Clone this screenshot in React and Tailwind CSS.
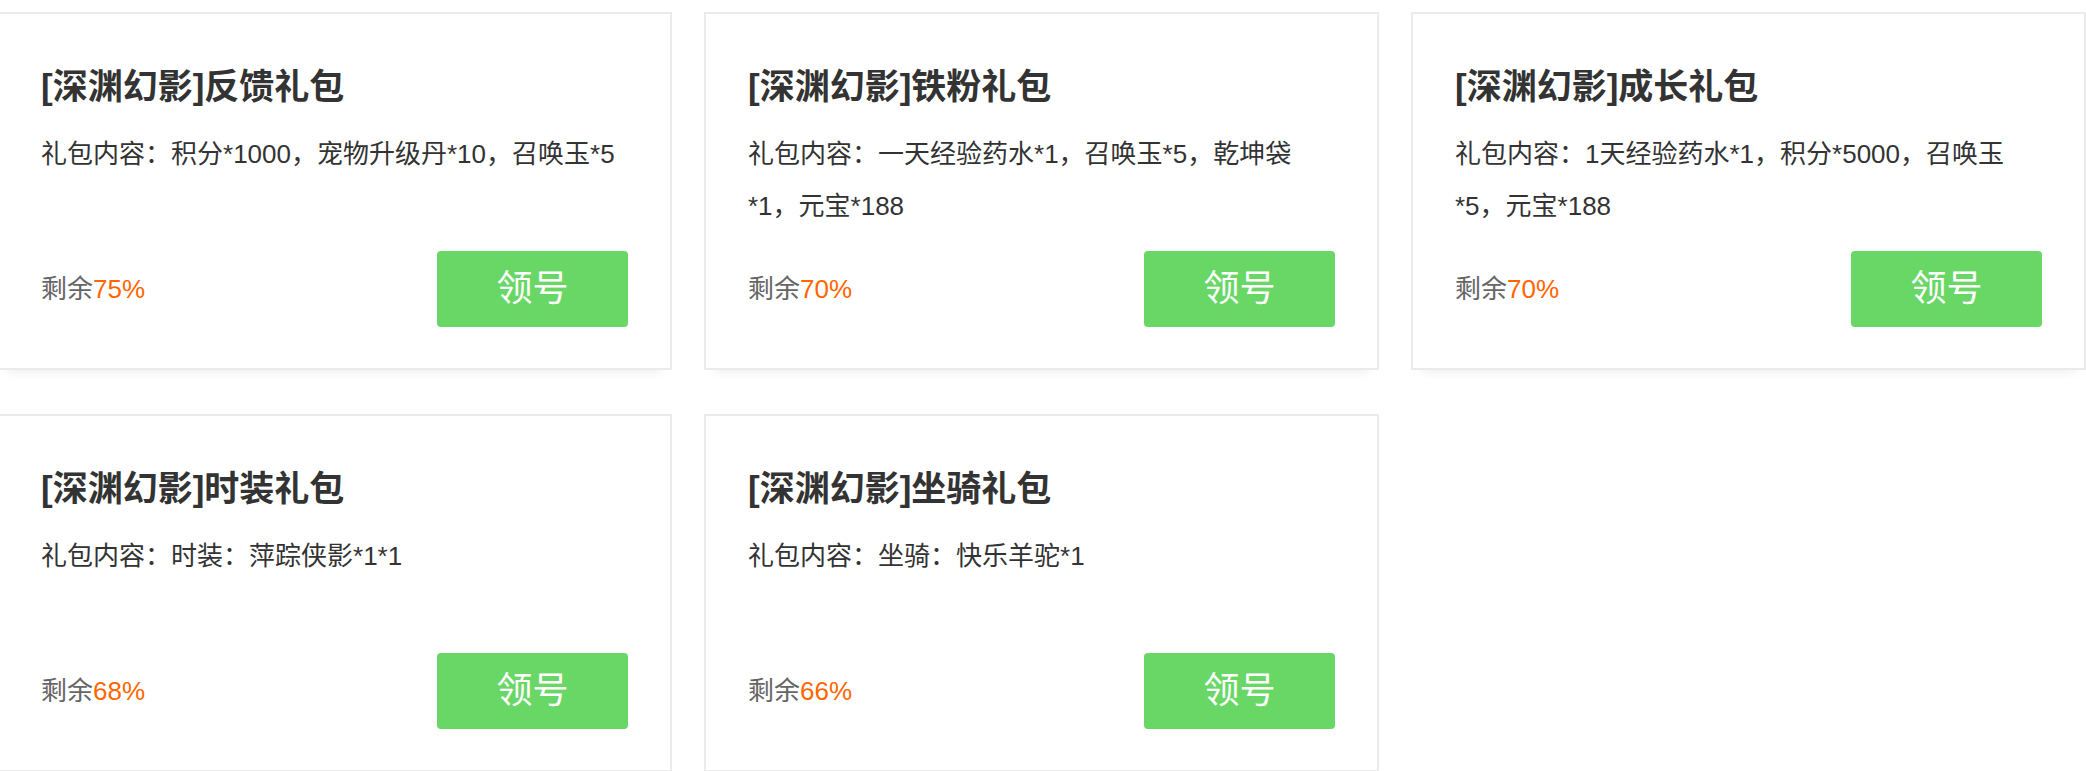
const packs = [
  { name: '反馈礼包', content: '积分*1000，宠物升级丹*10，召唤玉*5', left: '75%' },
  { name: '铁粉礼包', content: '一天经验药水*1，召唤玉*5，乾坤袋*1，元宝*188', left: '70%' },
  { name: '成长礼包', content: '1天经验药水*1，积分*5000，召唤玉*5，元宝*188', left: '70%' },
  { name: '时装礼包', content: '时装：萍踪侠影*1*1', left: '68%' },
  { name: '坐骑礼包', content: '坐骑：快乐羊驼*1', left: '66%' },
];

function GiftCard({ pack }) {
  return (
    <div className="flex h-[358px] flex-col border-2 border-[#ebebeb] bg-white px-[42px] pt-[50px] pb-[41px] shadow-[0_12px_10px_-10px_rgba(0,0,0,0.07)]">
      <h3 className="text-[35px] leading-[46px] font-bold text-[#333]">[深渊幻影]{pack.name}</h3>
      <p className="mt-[18px] text-[26px] leading-[52px] text-[#333]">礼包内容：{pack.content}</p>
      <div className="mt-auto flex items-center justify-between">
        <span className="text-[26px] text-[#666]">
          剩余<span className="text-[#ff6600]">{pack.left}</span>
        </span>
        <button className="flex h-[76px] w-[191px] items-center justify-center rounded-[4px] bg-[#69d766] text-[36px] text-white">
          领号
        </button>
      </div>
    </div>
  );
}

export default function App() {
  return (
    <div
      className="h-screen w-full overflow-hidden bg-white"
      style={{ fontFamily: '"Liberation Sans", "Noto Sans CJK SC", sans-serif' }}
    >
      {/* gift pack grid */}
      <div className="-ml-[3px] grid w-[2091px] grid-cols-[repeat(3,675px)] gap-x-[32px] gap-y-[44px] pt-[12px]">
        {packs.map((p) => (
          <GiftCard key={p.name} pack={p} />
        ))}
      </div>
    </div>
  );
}
